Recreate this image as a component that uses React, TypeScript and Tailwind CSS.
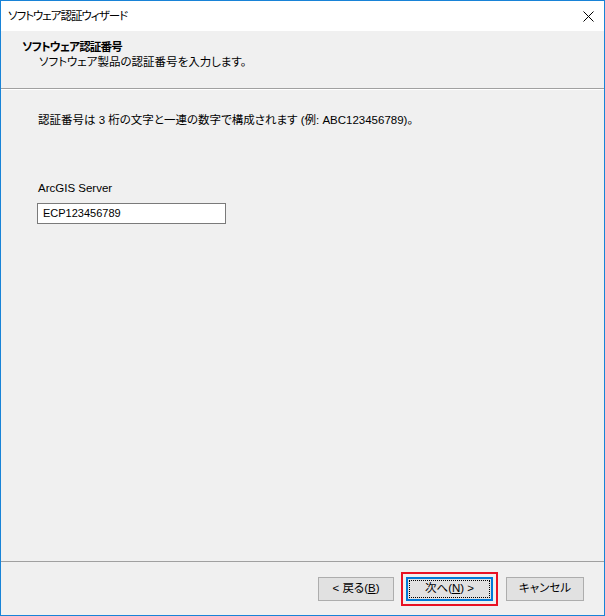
function TitleBar() {
  return (
    <div className="h-[30px] bg-white flex items-center justify-between pl-[7px] pr-[10px] shrink-0">
      <span className="text-[11.5px] leading-[16px] tracking-[-1px] text-black">ソフトウェア認証ウィザード</span>
      <svg width="11" height="11" viewBox="0 0 11 11">
        <path d="M0.5 0.5 L10.5 10.5 M10.5 0.5 L0.5 10.5" stroke="#000" strokeWidth="1" />
      </svg>
    </div>
  );
}

function Header() {
  return (
    <div className="h-[58px] shrink-0 pt-[9px] pl-[21px] border-b border-[#a0a0a0]">
      <div className="text-[11.5px] leading-[15px] font-bold tracking-[-0.8px] text-black">ソフトウェア認証番号</div>
      <div className="text-[11.5px] leading-[15px] pl-[17px] text-black">ソフトウェア製品の認証番号を入力します。</div>
    </div>
  );
}

function Body() {
  return (
    <div className="flex-1 border-t border-white pl-[37px] pt-[22px]">
      <div className="text-[11.5px] leading-[16px] text-black">
        認証番号は 3 桁の文字と一連の数字で構成されます (例: ABC123456789)。
      </div>
      <div className="mt-[52px] text-[11.5px] leading-[16px] text-black">ArcGIS Server</div>
      <div className="mt-[7px] -ml-px w-[189px] h-[21px] border border-[#7a7a7a] bg-white flex items-center pl-[5px] text-[11px] text-black">
        ECP123456789
      </div>
    </div>
  );
}

function Footer() {
  return (
    <div className="h-[54px] shrink-0 border-t border-[#a0a0a0] flex justify-end items-start pt-[15px] pr-[20px]">
      <button className="w-[76px] h-[24px] bg-[#e1e1e1] border border-[#adadad] text-[11.5px] text-black flex items-center justify-center">
        &lt; 戻る(<span className="underline">B</span>)
      </button>
      <button className="ml-[12px] w-[87px] h-[24px] bg-[#e1e1e1] border-2 border-[#0078d7] p-[1px] text-[11.5px] text-black outline-2 outline-[#e81123] outline-offset-[3px]">
        <span className="w-full h-full border border-dotted border-black flex items-center justify-center">
          次へ(<span className="underline">N</span>) &gt;
        </span>
      </button>
      <button className="ml-[13px] w-[78px] h-[24px] bg-[#e1e1e1] border border-[#adadad] text-[11.5px] text-black flex items-center justify-center">
        キャンセル
      </button>
    </div>
  );
}

export default function App() {
  return (
    <div className="w-[605px] h-[616px] border border-[#1883d7] bg-[#f0f0f0] flex flex-col overflow-hidden font-['Liberation_Sans','Noto_Sans_CJK_JP',sans-serif] [font-feature-settings:'palt']">
      <TitleBar />
      <Header />
      <Body />
      <Footer />
    </div>
  );
}
